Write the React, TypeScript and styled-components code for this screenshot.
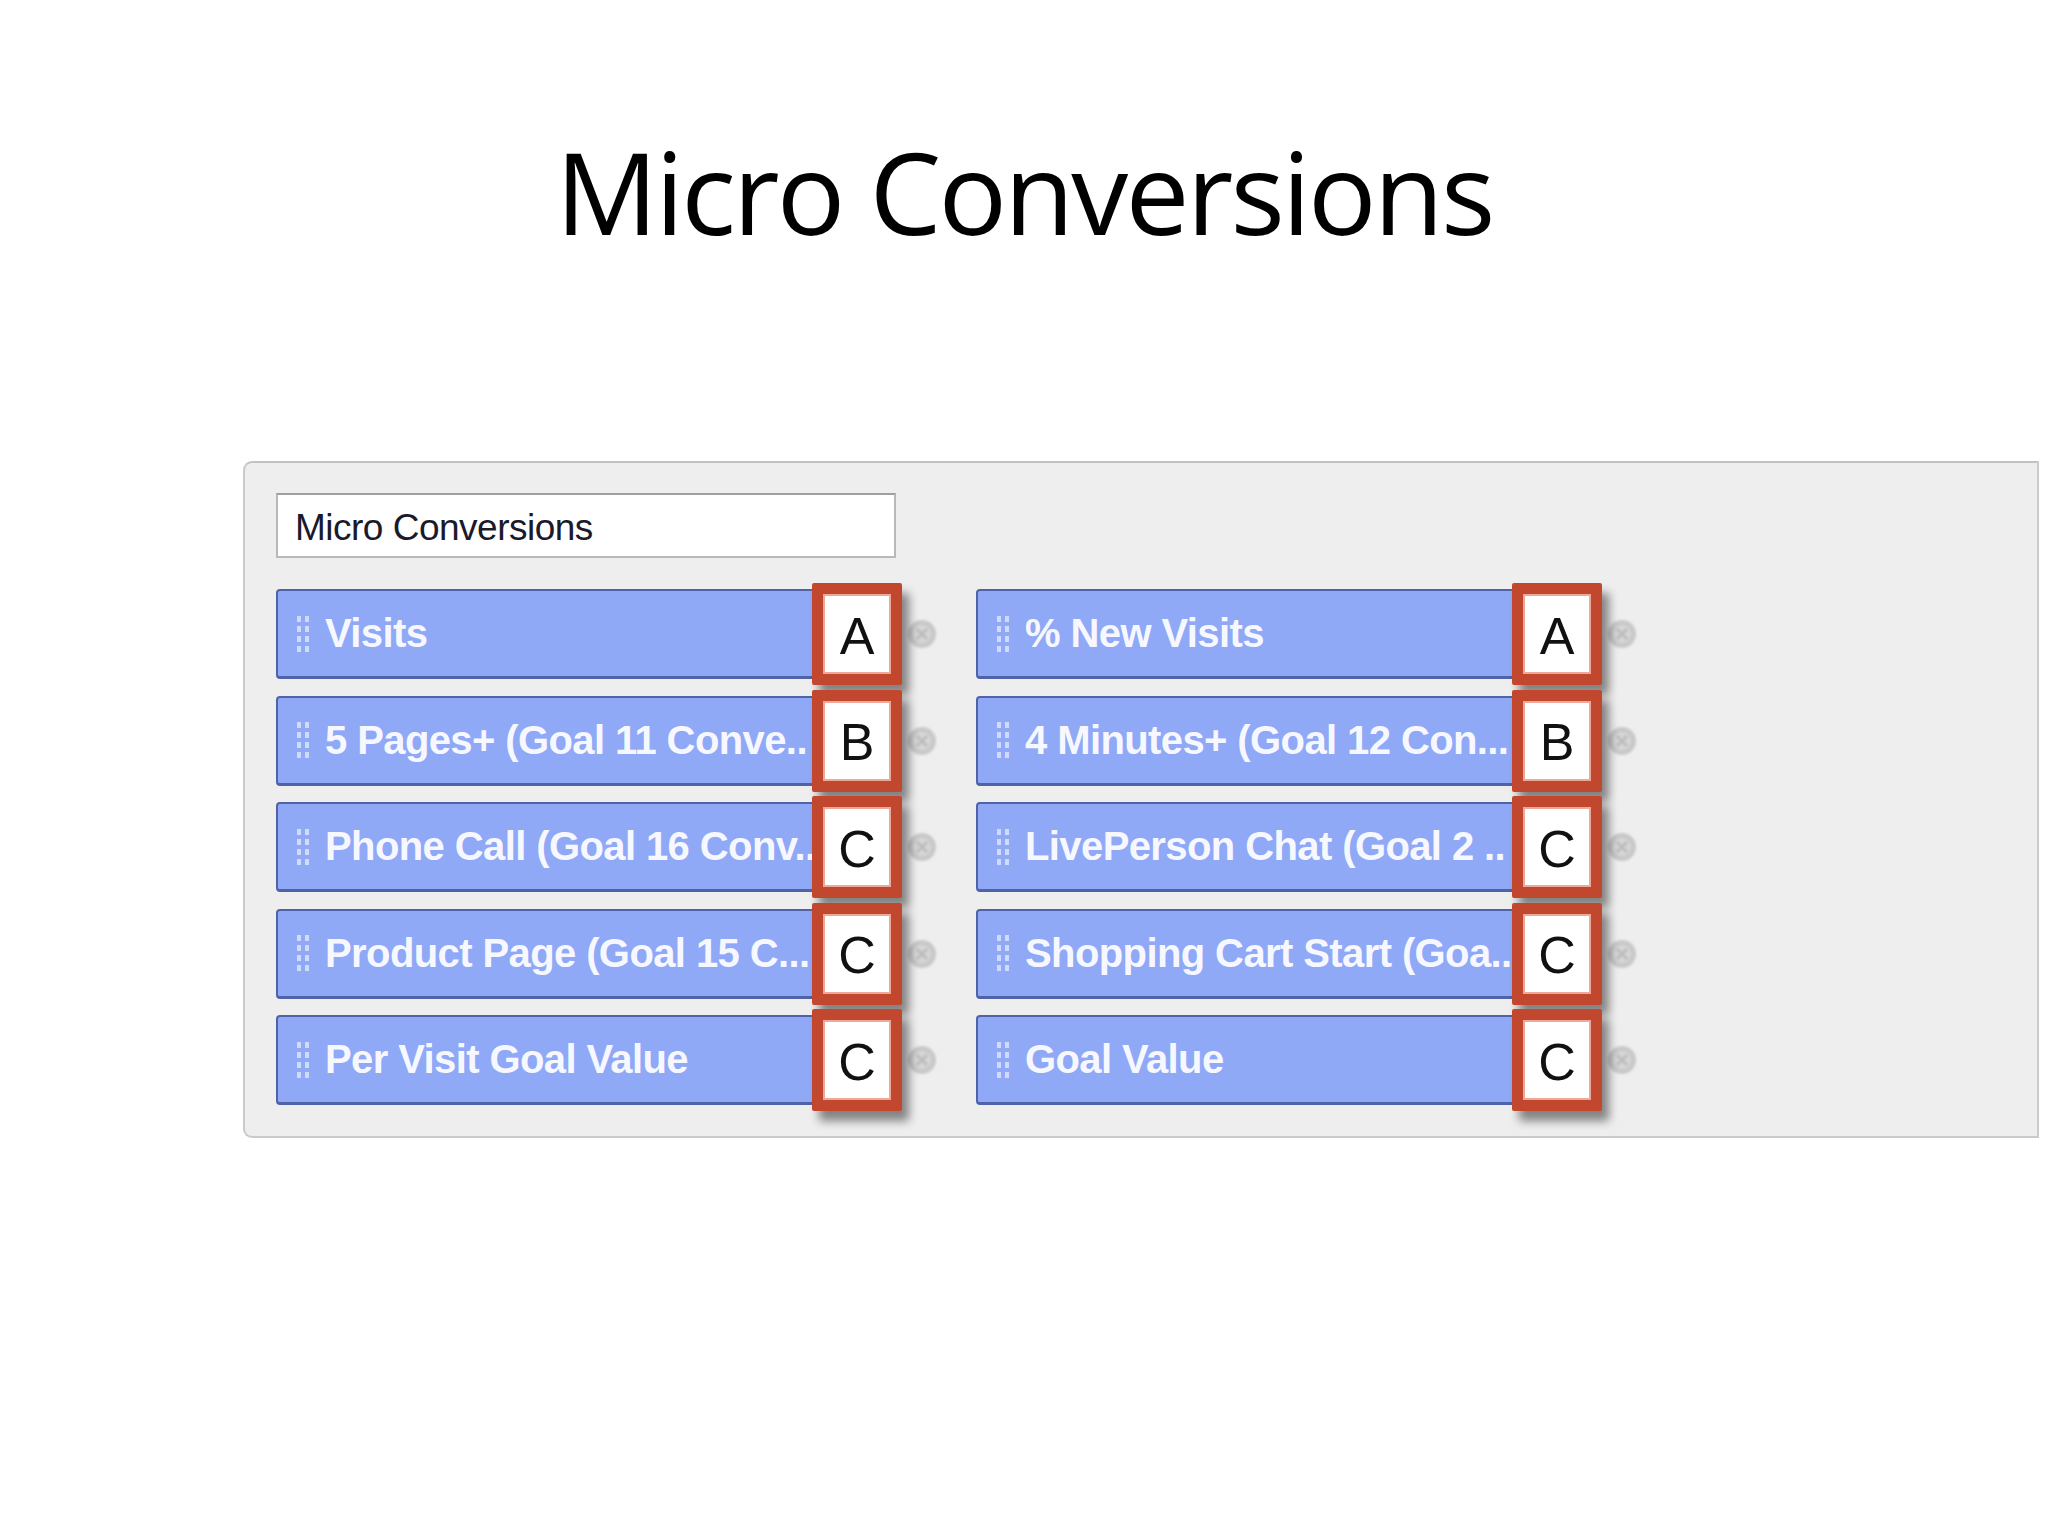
import styled, { createGlobalStyle } from 'styled-components';

type Metric = {
  label: string;
  segment: 'A' | 'B' | 'C';
};

const leftMetrics: Metric[] = [
  { label: 'Visits', segment: 'A' },
  { label: '5 Pages+ (Goal 11 Conve..', segment: 'B' },
  { label: 'Phone Call (Goal 16 Conv..', segment: 'C' },
  { label: 'Product Page (Goal 15 C...', segment: 'C' },
  { label: 'Per Visit Goal Value', segment: 'C' },
];

const rightMetrics: Metric[] = [
  { label: '% New Visits', segment: 'A' },
  { label: '4 Minutes+ (Goal 12 Con...', segment: 'B' },
  { label: 'LivePerson Chat (Goal 2 ..', segment: 'C' },
  { label: 'Shopping Cart Start (Goa..', segment: 'C' },
  { label: 'Goal Value', segment: 'C' },
];

// interleave so the grid fills row by row: left, right, left, right...
const metrics = leftMetrics.flatMap((m, i) => [m, rightMetrics[i]]);

const GripIcon = () => (
  <svg width="14" height="40" viewBox="0 0 14 40">
    {[0, 1, 2, 3].map((row) =>
      [0, 1].map((col) => (
        <rect
          key={`${row}-${col}`}
          x={col * 8}
          y={row * 10 + 2}
          width="4"
          height="6"
          fill="rgba(228, 235, 255, 0.75)"
        />
      )),
    )}
  </svg>
);

const RemoveIcon = () => (
  <svg width="32" height="32" viewBox="0 0 32 32">
    <circle cx="16" cy="16" r="14" fill="#c9c9c9" />
    <circle cx="16" cy="16" r="9" fill="#d6d6d6" />
    <path d="M11 11 L21 21 M21 11 L11 21" stroke="#bdbdbd" strokeWidth="3" />
  </svg>
);

const App = () => {
  return (
    <>
      <GlobalStyle />
      <Slide>
        <Title>Micro Conversions</Title>

        <Panel>
          <NameInput>Micro Conversions</NameInput>

          <MetricGrid>
            {metrics.map((metric) => (
              <MetricItem key={metric.label}>
                <MetricBar>
                  <GripIcon />
                  <MetricLabel>{metric.label}</MetricLabel>
                </MetricBar>
                <RemoveButton>
                  <RemoveIcon />
                </RemoveButton>
                <SegmentTag>{metric.segment}</SegmentTag>
              </MetricItem>
            ))}
          </MetricGrid>
        </Panel>
      </Slide>
    </>
  );
};

export default App;

const GlobalStyle = createGlobalStyle`
  html, body {
    margin: 0;
    padding: 0;
    background: #ffffff;
  }
`;

const Slide = styled.div`
  display: flex;
  flex-direction: column;
  width: 2048px;
  height: 1536px;
  overflow: hidden;
  background: #ffffff;
`;

const Title = styled.h1`
  margin: 0;
  padding-top: 134px;
  color: #000000;
  font-family: 'Open Sans', 'Noto Sans', sans-serif;
  font-size: 114px;
  font-weight: 400;
  line-height: 114px;
  letter-spacing: -2.8px;
  text-align: center;
`;

const Panel = styled.div`
  display: flex;
  flex-direction: column;
  align-items: flex-start;
  box-sizing: border-box;
  width: 1796px;
  margin-top: 213px;
  margin-left: 243px;
  padding: 30px 0 31px 31px;
  border: 2px solid #cacaca;
  border-top-color: #c2c2c2;
  border-radius: 9px 0 0 9px;
  background: #eeeeee;
`;

const NameInput = styled.div`
  display: flex;
  align-items: center;
  box-sizing: border-box;
  width: 620px;
  height: 65px;
  padding: 5px 0 0 17px;
  border: 2px solid #b9b9b9;
  border-top-color: #9f9f9f;
  background: #ffffff;
  color: #1a1a2a;
  font-family: 'Liberation Sans', Arial, sans-serif;
  font-size: 37px;
  letter-spacing: -0.5px;
`;

const MetricGrid = styled.div`
  display: grid;
  grid-template-columns: 612px 612px;
  grid-auto-rows: 90px;
  column-gap: 88px;
  row-gap: 16.5px;
  margin-top: 31px;
`;

const MetricItem = styled.div`
  position: relative;
`;

const MetricBar = styled.div`
  display: flex;
  align-items: center;
  gap: 14px;
  box-sizing: border-box;
  height: 100%;
  padding-left: 19px;
  overflow: hidden;
  border: 2px solid #5063a8;
  border-bottom-width: 3px;
  border-radius: 4px;
  background: #8fa9f6;
`;

const MetricLabel = styled.span`
  color: #f7f8ff;
  font-family: 'Liberation Sans', Arial, sans-serif;
  font-size: 40px;
  font-weight: 700;
  letter-spacing: -0.6px;
  white-space: nowrap;
`;

const RemoveButton = styled.div`
  position: absolute;
  top: 50%;
  left: 630px;
  display: flex;
  transform: translateY(-50%);
  filter: blur(1px);
`;

const SegmentTag = styled.div`
  position: absolute;
  top: -6px;
  left: 536px;
  display: flex;
  align-items: center;
  justify-content: center;
  box-sizing: border-box;
  width: 90px;
  height: 102px;
  padding-top: 3px;
  border: 11px solid #c1472e;
  border-radius: 2px;
  background: #ffffff;
  box-shadow:
    inset 0 0 0 2px #eda998,
    7px 10px 10px rgba(0, 0, 0, 0.45);
  color: #111111;
  font-family: 'Liberation Sans', Arial, sans-serif;
  font-size: 52px;
  font-weight: 400;
  line-height: 1;
`;
